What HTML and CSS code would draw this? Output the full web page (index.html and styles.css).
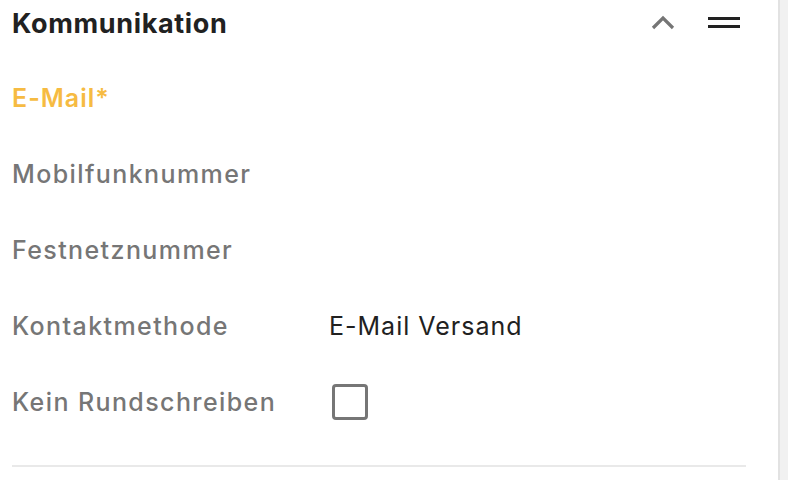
FILE: index.html
```html
<!DOCTYPE html>
<html lang="de">
<head>
    <meta charset="UTF-8">
    <meta name="viewport" content="width=device-width, initial-scale=1.0">
    <title>Kommunikation</title>
    <link rel="stylesheet" href="styles.css">
</head>
    <body>
        <div class="page">
        <div class="panel">
            <div class="panel-head">
                <h2>Kommunikation</h2>
                <div class="head-tools">
                    <button class="icon-btn" aria-label="Einklappen">
                        <svg width="24" height="16" viewBox="0 0 24 16">
                            <path d="M2 13 L12 3 L22 13" fill="none" stroke="#757575" stroke-width="3.2"/>
                        </svg>
                    </button>
                    <button class="icon-btn" aria-label="Verschieben">
                        <svg width="32" height="12" viewBox="0 0 32 12">
                            <rect x="0" y="0" width="32" height="3" fill="#212121"/>
                            <rect x="0" y="8" width="32" height="3" fill="#212121"/>
                        </svg>
                    </button>
                </div>
            </div>
            <div class="fields">
                <div class="label required">E-Mail*</div>
                <div class="value"></div>
                <div class="label">Mobilfunknummer</div>
                <div class="value"></div>
                <div class="label">Festnetznummer</div>
                <div class="value"></div>
                <div class="label">Kontaktmethode</div>
                <div class="value">E-Mail Versand</div>
                <div class="label">Kein Rundschreiben</div>
                <div class="value"><span class="checkbox"></span></div>
            </div>
            <div class="divider"></div>
        </div>
        <div class="scroll-edge"></div>
        </div>
    </body>
</html>
```

FILE: styles.css
```css
body {
    margin: 0;
    background: #fff;
    font-family: Inter, "Noto Sans", sans-serif;
    color: #212121;
}

.page {
    display: flex;
    height: 480px;
    overflow: hidden;
}

.panel {
    width: 736px;
    padding: 0 32px 0 12px;
}

.scroll-edge {
    width: 8px;
    border-left: 2px solid #e2e2e2;
    background: #f1f1f1;
}

.panel-head {
    display: flex;
    align-items: center;
    justify-content: space-between;
    height: 46px;
}

.panel-head h2 {
    margin: 0;
    font-size: 27px;
    font-weight: 700;
    letter-spacing: 0.65px;
}

.head-tools {
    display: flex;
    align-items: center;
    gap: 33px;
    padding-right: 6px;
}

.icon-btn {
    border: none;
    background: none;
    padding: 0;
    display: flex;
    cursor: pointer;
}

.fields {
    display: grid;
    grid-template-columns: 317px 1fr;
    grid-auto-rows: 76px;
    align-items: center;
    margin-top: 14px;
}

.label {
    font-size: 25px;
    font-weight: 500;
    letter-spacing: 1.4px;
    color: #767676;
}

.label.required {
    color: #f6bb42;
    font-weight: 600;
    letter-spacing: 1px;
}

.value {
    font-size: 25px;
    letter-spacing: 1px;
    color: #212121;
}

.checkbox {
    display: block;
    width: 30px;
    height: 30px;
    margin-left: 3px;
    border: 3px solid #767676;
    border-radius: 4px;
}

.divider {
    height: 2px;
    background: #e9e9e9;
    margin-top: 25px;
}
```
